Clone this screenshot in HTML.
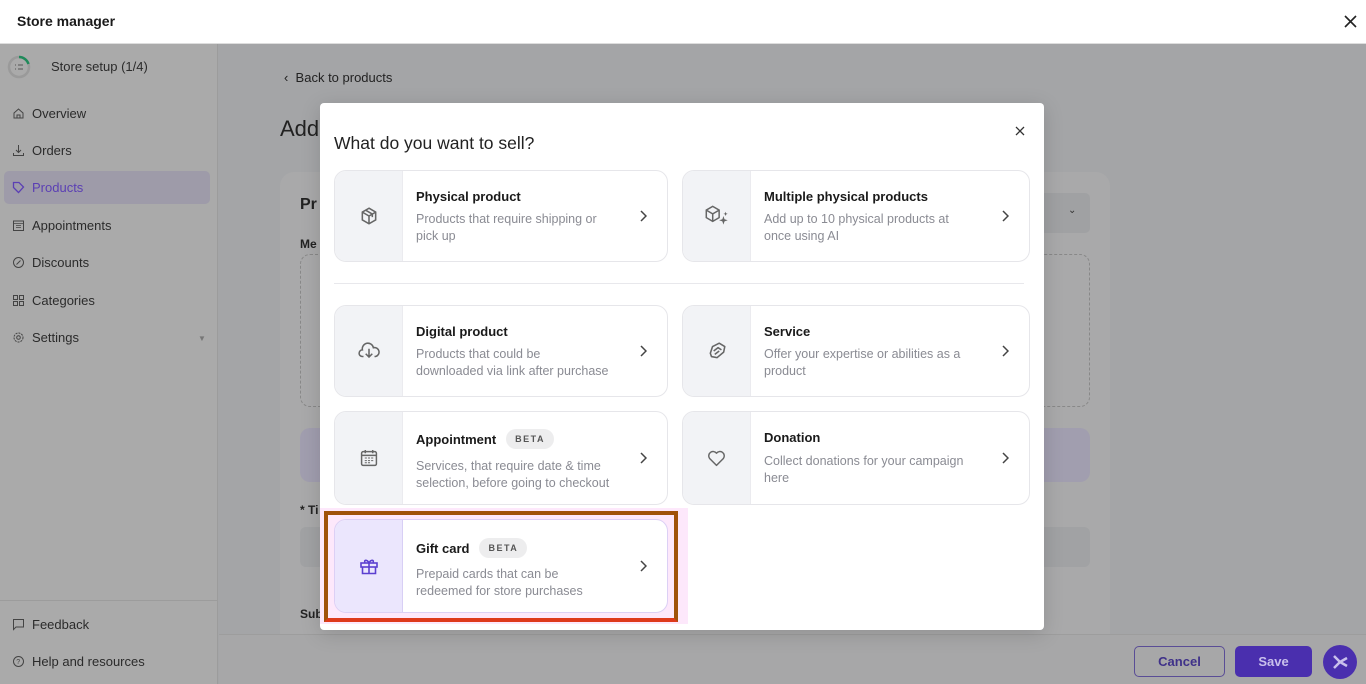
<!DOCTYPE html>
<html><head><meta charset="utf-8"><style>
*{box-sizing:border-box;margin:0;padding:0}
html,body{width:1366px;height:684px;overflow:hidden}
body{position:relative;font-family:"Liberation Sans",sans-serif;background:#a4a5a7;color:#222}
.a{position:absolute}
.hdr{left:0;top:0;width:1366px;height:44px;background:#fff;border-bottom:1px solid #ddd}
.side{left:0;top:44px;width:218px;height:640px;background:#aaaaaa;border-right:1px solid #9c9c9c}
.nav{position:absolute;left:12px;font-size:13px;color:#2b2b2b;display:flex;align-items:center;gap:7px}
.nav svg{width:13px;height:13px}
.card{position:absolute;background:#fff;border:1px solid #e6e6ea;border-radius:12px;overflow:hidden}
.card .ic{position:absolute;left:0;top:0;bottom:0;width:68px;background:#f2f3f6;border-right:1px solid #ebebef;display:flex;align-items:center;justify-content:center}
.card .t{position:absolute;left:81px;font-size:13px;font-weight:bold;color:#1a1a1a;display:flex;align-items:center;gap:10px}
.card .d{position:absolute;left:81px;font-size:12.5px;line-height:17px;color:#8a8b93;white-space:nowrap}
.card .ch{position:absolute;right:20px;top:50%;margin-top:-6px}
.beta{font-size:9px;letter-spacing:1.5px;font-weight:bold;color:#555;background:#ededee;border-radius:11px;padding:5px 9px}
</style></head><body>
<div class="a hdr"><div class="a" style="left:17px;top:13px;font-size:14px;font-weight:bold;color:#1a1a1a">Store manager</div>
<svg class="a" style="left:1343px;top:14px" width="15" height="15" viewBox="0 0 15 15"><path d="M2 2L13 13M13 2L2 13" stroke="#222" stroke-width="1.6"/></svg></div>
<div class="a side">
<svg class="a" style="left:7px;top:11px" width="24" height="24" viewBox="0 0 24 24"><circle cx="12" cy="12" r="10" fill="none" stroke="#9a9a9a" stroke-width="2.5"/><path d="M12 2A10 10 0 0 1 21.5 9" fill="none" stroke="#1f8a5a" stroke-width="2.5"/><path d="M8 10h1M11 10h5M8 14h1M11 14h5" stroke="#555" stroke-width="1"/></svg>
<div class="a" style="left:51px;top:15px;font-size:13px;color:#2b2b2b">Store setup (1/4)</div>
<div class="a" style="left:4px;top:127px;width:206px;height:33px;background:#9e9ba9;border-radius:5px"></div>
<div class="nav" style="top:62px"><svg viewBox="0 0 13 13"><path d="M2 6L6.5 2L11 6V11H2Z M5 11V8H8V11" fill="none" stroke="#444"/></svg>Overview</div>
<div class="nav" style="top:99px"><svg viewBox="0 0 13 13"><path d="M6.5 1V8M4 6L6.5 8.5L9 6M1.5 9V11.5H11.5V9" fill="none" stroke="#444"/></svg>Orders</div>
<div class="nav" style="top:136px;color:#5b3fb4"><svg viewBox="0 0 13 13"><path d="M1.5 1.5H7L11.5 6L6.5 11.5L1.5 6.5Z" fill="none" stroke="#5b3fb4" stroke-width="1.3"/></svg>Products</div>
<div class="nav" style="top:174px"><svg viewBox="0 0 13 13"><rect x="1.5" y="2" width="10" height="9.5" fill="none" stroke="#444"/><path d="M1.5 4.5H11.5M4 6.5h5M4 8.5h5" stroke="#444" stroke-width=".8"/></svg>Appointments</div>
<div class="nav" style="top:211px"><svg viewBox="0 0 13 13"><circle cx="6.5" cy="6.5" r="5" fill="none" stroke="#444"/><path d="M4.5 8.5L8.5 4.5" stroke="#444"/></svg>Discounts</div>
<div class="nav" style="top:249px"><svg viewBox="0 0 13 13"><rect x="1.5" y="1.5" width="4" height="4" fill="none" stroke="#444"/><rect x="7.5" y="1.5" width="4" height="4" fill="none" stroke="#444"/><rect x="1.5" y="7.5" width="4" height="4" fill="none" stroke="#444"/><rect x="7.5" y="7.5" width="4" height="4" fill="none" stroke="#444"/></svg>Categories</div>
<div class="nav" style="top:286px"><svg viewBox="0 0 13 13"><circle cx="6.5" cy="6.5" r="4.5" fill="none" stroke="#444" stroke-dasharray="2 1"/><circle cx="6.5" cy="6.5" r="1.8" fill="none" stroke="#444"/></svg>Settings</div>
<div class="a" style="left:198px;top:290px;font-size:8px;color:#777">▼</div>
<div class="a" style="left:0;top:556px;width:217px;height:1px;background:#9c9c9c"></div>
<div class="nav" style="top:573px"><svg viewBox="0 0 13 13"><path d="M1.5 1.5H11.5V9H4L1.5 11.5Z" fill="none" stroke="#444"/></svg>Feedback</div>
<div class="nav" style="top:610px"><svg viewBox="0 0 13 13"><circle cx="6.5" cy="6.5" r="5" fill="none" stroke="#444"/><text x="4.3" y="9.2" font-size="7" fill="#444">?</text></svg>Help and resources</div>
</div>
<div class="a" style="left:284px;top:70px;font-size:13px;color:#222">‹&nbsp; Back to products</div>
<div class="a" style="left:280px;top:116px;font-size:22px;color:#222">Add</div>
<div class="a" style="left:280px;top:172px;width:830px;height:462px;background:#a9a9aa;border-radius:14px 14px 0 0"></div>
<div class="a" style="left:300px;top:196px;font-size:16px;font-weight:bold;color:#222">Pr</div>
<div class="a" style="left:300px;top:237px;font-size:12px;font-weight:bold;color:#222">Me</div>
<div class="a" style="left:1040px;top:193px;width:50px;height:40px;background:#a0a1a3;border-radius:5px"></div>
<div class="a" style="left:1068px;top:205px;font-size:10px;color:#333">⌄</div>
<div class="a" style="left:300px;top:254px;width:790px;height:153px;border:1px dashed #888;border-radius:10px"></div>
<div class="a" style="left:300px;top:428px;width:790px;height:54px;background:#a19eaf;border-radius:10px"></div>
<div class="a" style="left:300px;top:503px;font-size:12px;font-weight:bold;color:#222">* Ti</div>
<div class="a" style="left:300px;top:527px;width:790px;height:40px;background:#a1a2a4;border-radius:6px"></div>
<div class="a" style="left:300px;top:607px;font-size:12px;font-weight:bold;color:#222">Sub</div>
<div class="a" style="left:219px;top:634px;width:1147px;height:50px;background:#a7a7a8;border-top:1px solid #9d9d9d"></div>
<div class="a" style="left:1134px;top:646px;width:91px;height:31px;border:1px solid #5a4d96;border-radius:5px;color:#3f3189;font-size:13px;font-weight:bold;text-align:center;line-height:29px">Cancel</div>
<div class="a" style="left:1235px;top:646px;width:77px;height:31px;background:#4a2fae;border-radius:5px;color:#c9c0ec;font-size:13px;font-weight:bold;text-align:center;line-height:31px">Save</div>
<div class="a" style="left:1323px;top:645px;width:34px;height:34px;background:#4a2fae;border-radius:50%"></div>
<svg class="a" style="left:1330px;top:652px" width="20" height="20" viewBox="0 0 20 20"><path d="M4 4L10 10L4 16M10 10L17 6M10 10L17 14" stroke="#c9c0ec" stroke-width="2.5" fill="none"/></svg>
<div class="a" style="left:320px;top:103px;width:724px;height:527px;background:#fff;border-radius:4px;box-shadow:0 4px 20px rgba(0,0,0,.15)"></div>
<div class="a" style="left:334px;top:133px;font-size:17.5px;color:#222">What do you want to sell?</div>
<svg class="a" style="left:1015px;top:126px" width="10" height="10" viewBox="0 0 10 10"><path d="M1 1L9 9M9 1L1 9" stroke="#333" stroke-width="1.3"/></svg>
<div class="a" style="left:334px;top:283px;width:690px;height:1px;background:#e8e8ec"></div>

<div class="card" style="left:334px;top:170px;width:334px;height:92px"><div class="ic"><svg width="20" height="20" viewBox="0 0 18 18"><path d="M9 2L15 5.5V12.5L9 16L3 12.5V5.5Z M3 5.5L9 9L15 5.5M9 9V16M6 3.8L12 7.3V10" fill="none" stroke="#666" stroke-width="1.4"/></svg></div>
<div class="t" style="top:18px">Physical product</div><div class="d" style="top:40px">Products that require shipping or<br>pick up</div>
<svg class="ch" width="8" height="12" viewBox="0 0 8 12"><path d="M2 1L7 6L2 11" fill="none" stroke="#444" stroke-width="1.5"/></svg></div>

<div class="card" style="left:682px;top:170px;width:348px;height:92px"><div class="ic"><svg width="30" height="26" viewBox="0 0 28 24"><path d="M10 3L16 6.5V13.5L10 17L4 13.5V6.5Z M4 6.5L10 10L16 6.5M10 10V17" fill="none" stroke="#666" stroke-width="1.4"/><path d="M20 12L21 15L24 16L21 17L20 20L19 17L16 16L19 15Z M22 8L22.6 9.5L24 10L22.6 10.5L22 12L21.4 10.5L20 10L21.4 9.5Z" fill="#666"/></svg></div>
<div class="t" style="top:18px">Multiple physical products</div><div class="d" style="top:40px">Add up to 10 physical products at<br>once using AI</div>
<svg class="ch" width="8" height="12" viewBox="0 0 8 12"><path d="M2 1L7 6L2 11" fill="none" stroke="#444" stroke-width="1.5"/></svg></div>

<div class="card" style="left:334px;top:305px;width:334px;height:92px"><div class="ic"><svg width="22" height="18" viewBox="0 0 20 16"><path d="M5 13H4A3 3 0 0 1 4 7A5 5 0 0 1 14 5A3.5 3.5 0 0 1 16 13H15M10 6V13M7 10.5L10 13.5L13 10.5" fill="none" stroke="#666" stroke-width="1.4"/></svg></div>
<div class="t" style="top:18px">Digital product</div><div class="d" style="top:40px">Products that could be<br>downloaded via link after purchase</div>
<svg class="ch" width="8" height="12" viewBox="0 0 8 12"><path d="M2 1L7 6L2 11" fill="none" stroke="#444" stroke-width="1.5"/></svg></div>

<div class="card" style="left:682px;top:305px;width:348px;height:92px"><div class="ic"><svg width="20" height="20" viewBox="0 0 18 18"><path d="M3 11L5 5L11 2L16 5L15 10L9 15L4 14Z M6 9L10 6L13 8M7 12L11 9" fill="none" stroke="#666" stroke-width="1.4" stroke-linejoin="round"/></svg></div>
<div class="t" style="top:18px">Service</div><div class="d" style="top:40px">Offer your expertise or abilities as a<br>product</div>
<svg class="ch" width="8" height="12" viewBox="0 0 8 12"><path d="M2 1L7 6L2 11" fill="none" stroke="#444" stroke-width="1.5"/></svg></div>

<div class="card" style="left:334px;top:411px;width:334px;height:94px"><div class="ic"><svg width="18" height="18" viewBox="0 0 17 17"><rect x="1.5" y="2.5" width="14" height="13" rx="1.5" fill="none" stroke="#666" stroke-width="1.4"/><path d="M1.5 6H15.5M5 1V4M12 1V4" stroke="#666" stroke-width="1.4"/><path d="M4.5 8.5h2M7.5 8.5h2M10.5 8.5h2M4.5 11h2M7.5 11h2M10.5 11h2M4.5 13h2M7.5 13h2" stroke="#666" stroke-width="1"/></svg></div>
<div class="t" style="top:17px">Appointment <span class="beta">BETA</span></div><div class="d" style="top:46px">Services, that require date &amp; time<br>selection, before going to checkout</div>
<svg class="ch" width="8" height="12" viewBox="0 0 8 12"><path d="M2 1L7 6L2 11" fill="none" stroke="#444" stroke-width="1.5"/></svg></div>

<div class="card" style="left:682px;top:411px;width:348px;height:94px"><div class="ic"><svg width="19" height="17" viewBox="0 0 18 16"><path d="M9 14.5L2.5 8A3.8 3.8 0 0 1 9 3A3.8 3.8 0 0 1 15.5 8Z" fill="none" stroke="#666" stroke-width="1.4" stroke-linejoin="round"/></svg></div>
<div class="t" style="top:18px">Donation</div><div class="d" style="top:41px">Collect donations for your campaign<br>here</div>
<svg class="ch" width="8" height="12" viewBox="0 0 8 12"><path d="M2 1L7 6L2 11" fill="none" stroke="#444" stroke-width="1.5"/></svg></div>

<div class="a" style="left:320px;top:508px;width:368px;height:116px;background:#fde8fb"></div>
<div class="a" style="left:324px;top:511px;width:354px;height:111px;border:4px solid #a0520a;border-bottom-color:#de3a1c"></div>
<div class="card" style="left:334px;top:519px;width:334px;height:94px;border-color:#dcd0f5"><div class="ic" style="background:#ebe6fd;border-right-color:#d8cff5"><svg width="20" height="18" viewBox="0 0 20 18"><rect x="2" y="6" width="16" height="4" fill="none" stroke="#5b3fd0" stroke-width="1.6"/><path d="M3.5 10V16.5H16.5V10M10 6V16.5M10 6C8 2 4.5 3 6 5.5M10 6C12 2 15.5 3 14 5.5" fill="none" stroke="#5b3fd0" stroke-width="1.6"/></svg></div>
<div class="t" style="top:18px">Gift card <span class="beta">BETA</span></div><div class="d" style="top:46px">Prepaid cards that can be<br>redeemed for store purchases</div>
<svg class="ch" width="8" height="12" viewBox="0 0 8 12"><path d="M2 1L7 6L2 11" fill="none" stroke="#444" stroke-width="1.5"/></svg></div>
</body></html>
